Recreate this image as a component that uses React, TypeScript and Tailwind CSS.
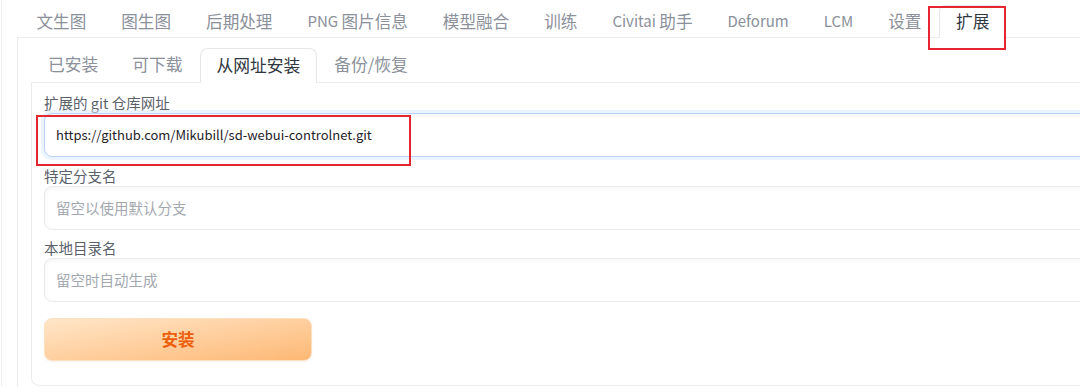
import React from "react";

type Tab = { latin?: string; cjk?: string };
const topTabs: Tab[] = [
  { cjk: "文生图" },
  { cjk: "图生图" },
  { cjk: "后期处理" },
  { latin: "PNG ", cjk: "图片信息" },
  { cjk: "模型融合" },
  { cjk: "训练" },
  { latin: "Civitai ", cjk: "助手" },
  { latin: "Deforum" },
  { latin: "LCM" },
  { cjk: "设置" },
];
const subTabs = ["已安装", "可下载"];

export default function App() {
  const font = { fontFamily: '"Noto Sans CJK SC", "Noto Sans", sans-serif' };
  return (
    <div className="relative w-[1080px] h-[387px] overflow-hidden bg-white" style={font}>
      <div className="ml-[1px] h-full border-l border-[#f0f0f0] pl-[15px]">
        {/* top tabs */}
        <div className="flex h-[37px] items-end pl-[2px]">
          {topTabs.map((t, i) => (
            <div key={i} className="flex h-[32px] items-center px-[17.5px] text-[16.6px] text-[#8b909a] whitespace-pre">
              {t.latin && <span className="text-[15px]">{t.latin}</span>}
              {t.cjk && <span>{t.cjk}</span>}
            </div>
          ))}
          <div className="relative z-10 -mb-px flex h-[33px] items-center rounded-t-md border border-b-0 border-[#e6e7ea] bg-white px-[16px] pb-px text-[16.75px] text-[#30363f]">
            扩展
          </div>
        </div>
        {/* outer panel */}
        <div className="h-[400px] w-[1200px] border-l border-t border-[#ebecee] pl-[13px] pt-[10px]">
          <div className="flex h-[34px] items-stretch">
            {subTabs.map((t) => (
              <div key={t} className="flex items-center px-[17px] text-[16.75px] text-[#8b909a]">
                {t}
              </div>
            ))}
            <div className="relative z-10 -mb-px flex items-center rounded-t-lg border border-b-0 border-[#e6e7ea] bg-white px-[16px] text-[16.75px] text-[#30363f]">
              从网址安装
            </div>
            <div className="flex items-center px-[17px] text-[16.75px] text-[#8b909a]">备份/恢复</div>
          </div>
          {/* inner panel */}
          <div className="h-[304px] w-[1200px] rounded-bl-lg border-b border-l border-t border-[#ebecee] pl-[12px] pt-[10px]">
            <div className="h-[20px] text-[14.5px] leading-[20px] text-[#5b616b]">扩展的 git 仓库网址</div>
            <div className="relative">
              <div className="flex h-[44px] w-[1100px] items-center rounded-lg border border-[#b9d3fb] bg-white px-[11px] text-[13px] text-[#1f2329] shadow-[0_0_0_3px_rgba(219,234,254,0.55),inset_0_2px_3px_rgba(0,0,0,0.04)]">
                https://github.com/Mikubill/sd-webui-controlnet.git
              </div>
              <div className="pointer-events-none absolute left-[-8px] top-[2px] h-[51px] w-[375px] border-2 border-[#e6262e]" />
            </div>
            <div className="mt-[9px] h-[20px] text-[14.5px] leading-[20px] text-[#5b616b]">特定分支名</div>
            <div className="flex h-[44px] w-[1100px] items-center rounded-lg border border-[#e8e9ec] bg-white px-[11px] text-[14.5px] text-[#a3a8b0] shadow-[inset_0_2px_4px_rgba(0,0,0,0.04)]">
              留空以使用默认分支
            </div>
            <div className="mt-[8px] h-[20px] text-[14.5px] leading-[20px] text-[#5b616b]">本地目录名</div>
            <div className="flex h-[44px] w-[1100px] items-center rounded-lg border border-[#e8e9ec] bg-white px-[11px] text-[14.5px] text-[#a3a8b0] shadow-[inset_0_2px_4px_rgba(0,0,0,0.04)]">
              留空时自动生成
            </div>
            <button className="mt-[16px] flex h-[43px] w-[268px] items-center justify-center rounded-lg border border-[#fde0c0] bg-gradient-to-br from-[#ffe6c8] to-[#fdb874] text-[16.5px] font-bold text-[#ec5f0c] shadow-[0_1px_2px_rgba(0,0,0,0.06)]">
              安装
            </button>
          </div>
        </div>
      </div>
      <div className="pointer-events-none absolute left-[928px] top-[6px] z-20 h-[44px] w-[78px] border-2 border-[#e6262e]" />
    </div>
  );
}
